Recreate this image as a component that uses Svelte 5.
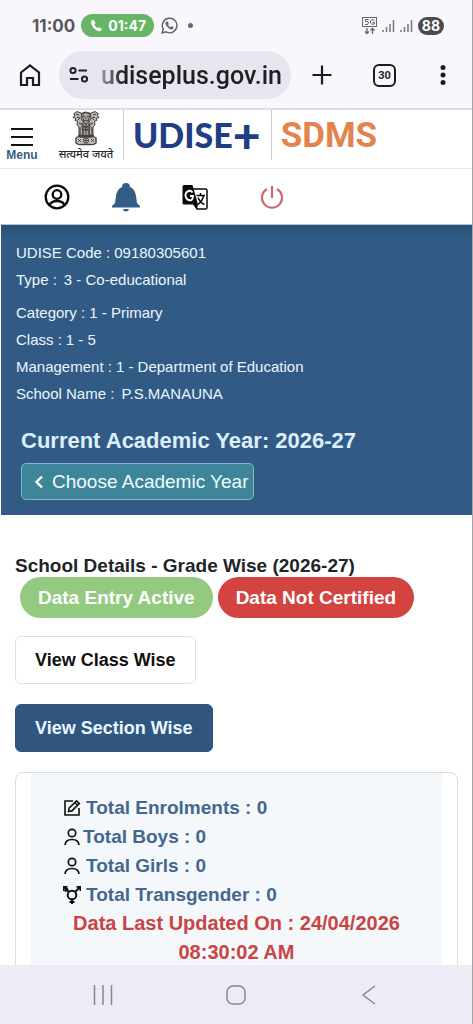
<script>
  const school = [
    { label: 'UDISE Code :', value: '09180305601' },
    { label: 'Type :', value: '3 - Co-educational', wide: true, last: true },
    { label: 'Category :', value: '1 - Primary' },
    { label: 'Class :', value: '1 - 5' },
    { label: 'Management :', value: '1 - Department of Education' },
    { label: 'School Name :', value: 'P.S.MANAUNA', wide: true }
  ]

  const totals = [
    { icon: 'edit', label: 'Total Enrolments', value: 0 },
    { icon: 'person', label: 'Total Boys', value: 0, tight: true },
    { icon: 'person', label: 'Total Girls', value: 0 },
    { icon: 'trans', label: 'Total Transgender', value: 0 }
  ]

  let url = 'udiseplus.gov.in'
  let view = 'section'
</script>

<div class="screen">
  <div class="status">
    <span class="time">11:00</span>
    <span class="call">
      <svg width="13" height="13" viewBox="0 0 24 24"><path fill="#fff" d="M6.6 1.5 2.8 3C1.2 4 1.4 8 4.200 12.800 7.500 18.300 13 22.500 17.500 22.500c2 0 4-2 4.500-4.200l-5.500-3.600-2.800 2.300C11 15.500 9 13 8 10.200L10.300 7.500z" /></svg>
      01:47
    </span>
    <svg class="whatsapp" width="17" height="17" viewBox="0 0 24 24" fill="none" stroke="#626168" stroke-width="2">
      <path d="M1.500 22.500 3.200 17A10.300 10.300 0 1 1 7.200 21z" />
      <path fill="#626168" stroke-width="1" d="M8.300 6.500 7 7.600c-.8 1.600.2 4 2.200 6.200s4.500 3.700 6.300 3.200c1.200-.4 2-1.300 1.900-2.200l-2.700-1.300-1.300 1.500c-1.900-.7-3.300-2.100-4-3.700l1-1.200-1.100-3z" />
    </svg>
    <span class="dot"></span>
    <svg class="network" width="16" height="18" viewBox="0 0 16 18" fill="none" stroke="#66656b">
      <rect x=".5" y=".5" width="14" height="9" />
      <path d="M6.500 2.500h-3v2h2.500q1 1.500-.5 3H3M12.500 3.500q-3-2-4 .5v2q1 2 4 1V5.500h-2" />
      <path stroke-width="1.300" d="M5 11v5.500M3 14.500l2 2 2-2M10.500 17v-5.500M8.500 13.500l2-2 2 2" />
    </svg>
    {#each [1, 2] as sim}
      <svg class="signal" width="13" height="14" viewBox="0 0 13 14" stroke="#77757c" stroke-width="1.500">
        <path d="M1 11v2M4.500 8v5M8 5v8M11.500 1v12" />
      </svg>
    {/each}
    <span class="battery">88</span>
  </div>

  <div class="toolbar">
    <button aria-label="Home">
      <svg width="22" height="24" viewBox="0 0 22 24" fill="none" stroke="#1c1b20" stroke-width="2.200"><path d="M2 9.500 11 2.500l9 7V22h-6v-7H8v7H2z" /></svg>
    </button>
    <label class="address">
      <svg width="20" height="18" viewBox="0 0 20 18" fill="none" stroke="#222126" stroke-width="2">
        <circle cx="4" cy="4.500" r="2.600" /><path d="M9.500 4.500H18M1 13h8.500" /><circle cx="15.500" cy="13" r="2.600" />
      </svg>
      <input aria-label="Address" bind:value={url} />
    </label>
    <button aria-label="New tab">
      <svg width="20" height="20" viewBox="0 0 20 20" stroke="#1c1b20" stroke-width="2.200"><path d="M10 .5v19M.5 10h19" /></svg>
    </button>
    <button class="tabs">30</button>
    <button aria-label="More">
      <svg width="6" height="20" viewBox="0 0 6 20" fill="#1c1b20"><circle cx="3" cy="2.500" r="2.500" /><circle cx="3" cy="10" r="2.500" /><circle cx="3" cy="17.500" r="2.500" /></svg>
    </button>
  </div>

  <main>
    <header class="brand">
      <button class="menu">
        <svg width="22" height="20" viewBox="0 0 22 20" stroke="#111" stroke-width="2"><path d="M0 2h22M0 10h22M0 18h22" /></svg>
        Menu
      </button>
      <div class="emblem">
        <svg width="28" height="36" viewBox="0 0 28 36" fill="none" stroke="#45423f" stroke-width="1">
          <path fill="#aaa7a4" d="M9 3.500Q13 .5 19 3.500l2 6-2 6 1 10H8l1-10-2-6z" />
          <path fill="#bbb8b5" d="M9 3 5 1.500 1.500 4l1.500 1-2 2.500 3 1-1 2 2.500.5L5 15l2 2 0 8h4l-1-9 2-5zM19 3l4-1.500L26.500 4 25 5l2 2.500-3 1 1 2-2.500.5.500 4-2 2v8h-4l1-9-2-5z" />
          <path d="M10 4q4-3 8 0l1 4-2 4-3 2-3-2-2-4zM11 6l2 .5M15 6.500l2-.5M14 7v2M11.500 10q2.500 2 5 0M4 4l3 1M24 4l-3 1M5 7l3 1-2 2M23 7l-3 1 2 2M9 13l2 3M19 13l-2 3" />
          <path stroke-width="1.300" d="M11 14v10M14 14v10M17 14v10M8 17v7M20 17v7M12 16l2 2 2-2M12 19l2 2 2-2M7 13l2 1M21 13l-2 1" />
          <path stroke-width="1.400" fill="#c9c6c3" d="M6 25.500h16M4 28q2-2 5-1h10q3-1 5 1v5q-2 2-5 1.500H9q-3 .5-5-1.500z" />
          <circle cx="14" cy="30.500" r="2.700" />
          <path d="M14 28v5M11.500 30.500h5M6 29l3 3M9 29l-3 3M19 29l3 3M22 29l-3 3" />
        </svg>
        <span>सत्यमेव जयते</span>
      </div>
      <div class="udise">UDISE<span>+</span></div>
      <div class="sdms">SDMS</div>
    </header>

    <nav class="actions">
      <button aria-label="Profile">
        <svg width="26" height="26" viewBox="0 0 26 26" fill="none" stroke="#0b0b0b" stroke-width="2.300">
          <circle cx="13" cy="13" r="11.300" /><circle cx="13" cy="10.500" r="4.300" /><path d="M5.500 21q2-4 7.500-4t7.500 4" />
        </svg>
      </button>
      <button aria-label="Notifications">
        <svg width="30" height="30" viewBox="0 0 30 30" fill="#315d87">
          <path d="M11 5q0-4 4-4t4 4q5 2 6 9l1 7 3 3v1.500H1V24l3-3 1-7q1-7 6-9zM12 27h6q-.5 2.500-3 2.500T12 27z" />
        </svg>
      </button>
      <button aria-label="Translate">
        <svg width="26" height="26" viewBox="0 0 26 26">
          <path d="M11 5h12.500q1.500 0 1.500 1.500v17q0 1.500-1.500 1.500H15l-3-5" fill="#fff" stroke="#0b0b0b" stroke-width="1.500" />
          <path d="M2 1h8.500L16 20.500l-1 4.500-4-4.500H2q-1.500 0-1.500-1.500V2.500Q.5 1 2 1z" fill="#0b0b0b" />
          <path d="M10.500 8.500Q8.500 5.500 5.500 7.500t-1.500 6q2 3.500 5.500 2.500 1.500-1 1.500-4H8" fill="none" stroke="#fff" stroke-width="1.900" />
          <path d="M14.500 11.500h8.500M18.500 9v2.500M16 13.500q2 5 6.500 7M21.500 12q-1 5-5.500 8.500" fill="none" stroke="#0b0b0b" stroke-width="1.500" />
        </svg>
      </button>
      <button class="logout" aria-label="Log out">
        <svg width="24" height="24" viewBox="0 0 24 24" fill="none" stroke="#d0686a" stroke-width="2.200">
          <path d="M12 1v12M7 4A10 10 0 1 0 17 4" />
        </svg>
      </button>
    </nav>

    <section class="school">
      <dl>
        {#each school as row}
          <div class:last={row.last} class:wide={row.wide}>
            <dt>{row.label}</dt>
            <dd>{row.value}</dd>
          </div>
        {/each}
      </dl>
      <h1>Current Academic Year: 2026-27</h1>
      <button class="choose">
        <svg width="10" height="14" viewBox="0 0 10 14" fill="none" stroke="#fff" stroke-width="2.400"><path d="M8 1.500 2.500 7 8 12.500" /></svg>
        Choose Academic Year
      </button>
    </section>

    <section class="details">
      <h2>School Details - Grade Wise (2026-27)</h2>
      <div class="badges">
        <span class="badge active">Data Entry Active</span>
        <span class="badge pending">Data Not Certified</span>
      </div>
      <button class="view" class:selected={view === 'class'} on:click={() => (view = 'class')}>View Class Wise</button>
      <button class="view" class:selected={view === 'section'} on:click={() => (view = 'section')}>View Section Wise</button>

      <div class="card">
        <div class="summary">
          <ul>
            {#each totals as total}
              <li class:tight={total.tight}>
                {#if total.icon === 'edit'}
                  <svg width="18" height="18" viewBox="0 0 18 18" fill="none" stroke="#111" stroke-width="1.600">
                    <path d="M10 2H2v14h14V9" /><path d="m5.500 12.500.6-3.300L13.500 1.800l2.800 2.800-7.400 7.300zM11.800 3.500l2.800 2.800" />
                  </svg>
                {:else if total.icon === 'person'}
                  <svg width="18" height="18" viewBox="0 0 18 18" fill="none" stroke="#111" stroke-width="1.700">
                    <circle cx="9" cy="5" r="3.700" /><path d="M2 17q.5-5.500 7-5.500t7 5.500" />
                  </svg>
                {:else}
                  <svg width="18" height="18" viewBox="0 0 18 18" fill="none" stroke="#111" stroke-width="2">
                    <circle cx="9" cy="9" r="4.300" /><path d="M9 13v5M6.500 16h5M6 6 1 1M12 6l5-5M.5 5V.8h4M13.500.8h4V5M2 5.500l3-3" />
                  </svg>
                {/if}
                {total.label} : {total.value}
              </li>
            {/each}
          </ul>
          <p>Data Last Updated On : 24/04/2026 08:30:02 AM</p>
        </div>
      </div>
    </section>
  </main>

  <div class="phone-nav">
    <button aria-label="Recent apps">
      <svg width="20" height="20" viewBox="0 0 20 20" stroke="#89878e" stroke-width="1.500"><path d="M1.500 0v20M10 0v20M18.500 0v20" /></svg>
    </button>
    <button aria-label="Home screen">
      <svg width="20" height="20" viewBox="0 0 20 20" fill="none" stroke="#89878e" stroke-width="1.500"><rect x="1" y="1" width="18" height="18" rx="6" /></svg>
    </button>
    <button aria-label="Back">
      <svg width="20" height="20" viewBox="0 0 20 20" fill="none" stroke="#89878e" stroke-width="1.500"><path d="M16 1 4 10l12 9" /></svg>
    </button>
  </div>
</div>

<style>
  :global(body) {
    margin: 0;
  }
  .screen {
    box-sizing: border-box;
    display: flex;
    flex-direction: column;
    height: 100vh;
    border-right: 1px solid #a3a3a8;
    background: #fff;
    font-family: "Liberation Sans", Arial, sans-serif;
    color: #222429;
  }
  button {
    padding: 0;
    border: 0;
    background: none;
    font: inherit;
    color: inherit;
  }
  svg {
    display: block;
    flex: none;
  }

  .status {
    display: flex;
    align-items: center;
    flex: none;
    height: 51px;
    padding: 0 28px 0 32px;
    box-sizing: border-box;
    background: #faf6fe;
    font-family: Inter, sans-serif;
    font-weight: 700;
    color: #57565c;
  }
  .time {
    font-size: 17px;
  }
  .call {
    display: flex;
    align-items: center;
    gap: 5px;
    height: 23px;
    margin-left: 6px;
    padding: 0 8px 0 9px;
    border-radius: 12px;
    background: #68b566;
    color: #fff;
    font-size: 14px;
  }
  .whatsapp {
    margin: 0 10px 0 7px;
  }
  .dot {
    width: 5px;
    height: 5px;
    border-radius: 50%;
    background: #68676d;
  }
  .network {
    margin: 0 4px 0 auto;
  }
  .signal {
    margin-right: 5px;
  }
  .battery {
    padding: 0 4px;
    border-radius: 9px;
    background: #4c4b50;
    color: #fff;
    font-size: 14px;
    line-height: 18px;
  }

  .toolbar {
    display: flex;
    align-items: center;
    flex: none;
    height: 59px;
    padding: 0 26px 9px 19px;
    box-sizing: border-box;
    border-bottom: 2px solid #dfdee5;
    background: #faf6fe;
  }
  .address {
    display: flex;
    align-items: center;
    flex: 1;
    min-width: 0;
    height: 48px;
    margin: 0 21px 0 18px;
    padding: 0 8px 0 10px;
    box-sizing: border-box;
    border-radius: 24px;
    background: #e8e5ee;
  }
  .address input {
    flex: 1;
    min-width: 0;
    margin-left: 12px;
    padding: 0;
    border: 0;
    outline: 0;
    background: linear-gradient(90deg, #99979f, #1f1e23 22px);
    background-clip: text;
    color: transparent;
    font: 500 25px Roboto, sans-serif;
  }
  .tabs {
    width: 23px;
    height: 23px;
    margin: 0 44px 0 41px;
    box-sizing: border-box;
    border: 2px solid #1c1b20;
    border-radius: 6px;
    font: 700 11px Roboto, sans-serif;
  }

  main {
    flex: 1;
    min-height: 0;
    overflow: hidden;
  }
  .brand {
    display: flex;
    align-items: flex-start;
    height: 58px;
    border-bottom: 1px solid #e6e6ea;
  }
  .menu {
    display: flex;
    flex-direction: column;
    align-items: center;
    width: 32px;
    margin: 17px 0 0 6px;
    color: #375f84;
    font-size: 12px;
    font-weight: 700;
    line-height: 16px;
  }
  .emblem {
    display: flex;
    flex-direction: column;
    align-items: center;
    width: 64px;
    margin-left: 16px;
    color: #29272a;
    font: 500 11px "Noto Sans", "Noto Sans Devanagari", sans-serif;
    line-height: 16px;
    white-space: nowrap;
  }
  .udise,
  .sdms {
    display: flex;
    align-items: center;
    height: 50px;
    border-left: 1px solid #cbcbd2;
    box-sizing: border-box;
  }
  .udise {
    margin-left: 5px;
    padding: 0 10px 0 9px;
    color: #1f3e84;
    font: 900 34px Lato, sans-serif;
    line-height: 48px;
  }
  .udise span {
    font-size: 48px;
  }
  .sdms {
    padding-left: 9px;
    color: #e5834e;
    font: 700 35px Roboto, sans-serif;
  }

  .actions {
    display: flex;
    align-items: center;
    gap: 39px;
    height: 55px;
    padding-left: 42px;
    border-bottom: 1px solid #b9c2ce;
  }
  .actions button {
    display: flex;
    justify-content: center;
    width: 30px;
  }
  .actions .logout {
    margin-left: 8px;
  }

  .school {
    margin-left: 1px;
    padding: 14px 15px 15px;
    background: linear-gradient(#285078, #315b84 14px);
    color: #eaf6fd;
  }
  dl {
    margin: 0;
    font-size: 15px;
    line-height: 27px;
  }
  dl div {
    display: flex;
    gap: 4px;
  }
  dl .wide {
    gap: 7px;
  }
  dl .last {
    margin-bottom: 6px;
  }
  dd {
    margin: 0;
  }
  h1 {
    margin: 20px 0 8px 5px;
    color: #dcefff;
    font-size: 22px;
    font-weight: 700;
    line-height: 28px;
  }
  .choose {
    display: flex;
    align-items: center;
    gap: 8px;
    height: 37px;
    margin-left: 5px;
    padding: 0 5px 0 12px;
    border: 1px solid #7fb9cb;
    border-radius: 5px;
    background: #3e8599;
    color: #f1fcff;
    font-size: 19px;
  }

  .details {
    padding: 40px 14px 0 15px;
  }
  h2 {
    margin: 0;
    font-size: 19px;
    line-height: 22px;
  }
  .badges {
    display: flex;
    gap: 5px;
    margin: 0 0 18px 5px;
  }
  .badge {
    padding: 0 18px;
    border-radius: 21px;
    color: #fff;
    font-size: 19px;
    font-weight: 700;
    line-height: 41px;
    white-space: nowrap;
  }
  .active {
    background: #94c980;
  }
  .pending {
    background: #d34340;
  }
  .view {
    display: block;
    height: 48px;
    margin-bottom: 20px;
    padding: 0 19px;
    border: 1px solid #e0e0e2;
    border-radius: 6px;
    color: #111;
    font-size: 18px;
    font-weight: 700;
  }
  .selected {
    border-color: #30567f;
    background: #30567f;
    color: #e9f7ff;
  }
  .card {
    padding: 0 15px;
    border: 1px solid #dcdde0;
    border-radius: 8px;
  }
  .summary {
    padding: 20px 32px;
    background: #f5f8fb;
    font-size: 19px;
    font-weight: 700;
    line-height: 29px;
  }
  ul {
    margin: 0;
    padding: 0;
    list-style: none;
    color: #43678e;
  }
  li {
    display: flex;
    align-items: center;
    gap: 5px;
  }
  li.tight {
    gap: 2px;
  }
  .summary p {
    margin: 0;
    color: #c94545;
    font-size: 20px;
    text-align: center;
  }

  .phone-nav {
    display: flex;
    align-items: center;
    justify-content: space-between;
    flex: none;
    height: 59px;
    padding: 0 93px;
    box-sizing: border-box;
    background: #edebf5;
  }
</style>
